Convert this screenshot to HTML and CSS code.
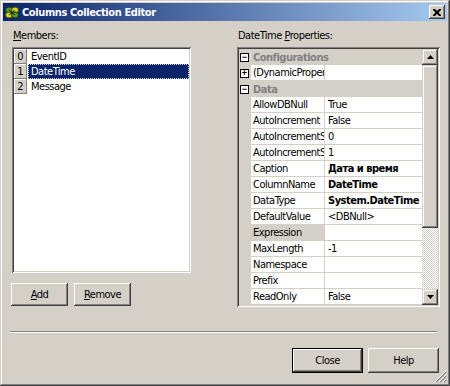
FILE: index.html
```html
<!DOCTYPE html>
<html lang="en">
<head>
    <meta charset="UTF-8">
    <meta name="viewport" content="width=device-width, initial-scale=1.0">
    <title>Columns Collection Editor</title>
    <link rel="stylesheet" href="styles.css">
</head>
<body>
    <div class="window">
        <div class="titlebar">
            <svg class="app-icon" width="16" height="16" viewBox="0 0 16 16">
                <ellipse cx="5" cy="6" rx="3.5" ry="3" fill="#5a9a1a" stroke="#1e3d08"/>
                <ellipse cx="11" cy="6" rx="3.5" ry="3" fill="#d8d820" stroke="#4a4a08"/>
                <ellipse cx="5" cy="11" rx="3.5" ry="3" fill="#d8d820" stroke="#4a4a08"/>
                <ellipse cx="11" cy="11" rx="3.5" ry="3" fill="#5a9a1a" stroke="#1e3d08"/>
                <path d="M5 6 L11 11 M11 6 L5 11" stroke="#123" stroke-width="1"/>
            </svg>
            <span class="title">Columns Collection Editor</span>
            <button class="close-x">
                <svg width="8" height="7" viewBox="0 0 8 7">
                    <path d="M0 0h2l2 2 2-2h2v1l-2.5 2.5 2.5 2.5v1h-2l-2-2-2 2h-2v-1l2.5-2.5-2.5-2.5z" fill="#000"/>
                </svg>
            </button>
        </div>

        <div class="content">
            <div class="col-left">
                <div class="label"><u>M</u>embers:</div>
                <div class="listbox">
                    <div class="item"><span class="idx">0</span><span class="item-name">EventID</span></div>
                    <div class="item selected"><span class="idx">1</span><span class="item-name">DateTime</span></div>
                    <div class="item"><span class="idx">2</span><span class="item-name">Message</span></div>
                </div>
                <div class="list-buttons">
                    <button class="btn small"><u>A</u>dd</button>
                    <button class="btn small"><u>R</u>emove</button>
                </div>
            </div>

            <div class="col-right">
                <div class="label">DateTime <u>P</u>roperties:</div>
                <div class="propgrid">
                    <div class="rows">
                        <div class="category"><span class="box">&minus;</span>Configurations</div>
                        <div class="prop"><span class="margin"><span class="box">+</span></span><span class="pname">(DynamicProper</span><span class="pvalue"></span></div>
                        <div class="category"><span class="box">&minus;</span>Data</div>
                        <div class="prop"><span class="margin"></span><span class="pname">AllowDBNull</span><span class="pvalue">True</span></div>
                        <div class="prop"><span class="margin"></span><span class="pname">AutoIncrement</span><span class="pvalue">False</span></div>
                        <div class="prop"><span class="margin"></span><span class="pname">AutoIncrementS</span><span class="pvalue">0</span></div>
                        <div class="prop"><span class="margin"></span><span class="pname">AutoIncrementS</span><span class="pvalue">1</span></div>
                        <div class="prop"><span class="margin"></span><span class="pname">Caption</span><span class="pvalue bold">Дата и время</span></div>
                        <div class="prop"><span class="margin"></span><span class="pname">ColumnName</span><span class="pvalue bold">DateTime</span></div>
                        <div class="prop"><span class="margin"></span><span class="pname">DataType</span><span class="pvalue bold">System.DateTime</span></div>
                        <div class="prop"><span class="margin"></span><span class="pname">DefaultValue</span><span class="pvalue">&lt;DBNull&gt;</span></div>
                        <div class="prop"><span class="margin"></span><span class="pname current">Expression</span><span class="pvalue"></span></div>
                        <div class="prop"><span class="margin"></span><span class="pname">MaxLength</span><span class="pvalue">-1</span></div>
                        <div class="prop"><span class="margin"></span><span class="pname">Namespace</span><span class="pvalue"></span></div>
                        <div class="prop"><span class="margin"></span><span class="pname">Prefix</span><span class="pvalue"></span></div>
                        <div class="prop"><span class="margin"></span><span class="pname">ReadOnly</span><span class="pvalue">False</span></div>
                    </div>
                    <div class="scrollbar">
                        <div class="sb-btn"><svg width="7" height="4" viewBox="0 0 7 4"><path d="M3.5 0L7 4H0z" fill="#000"/></svg></div>
                        <div class="sb-thumb"></div>
                        <div class="sb-track"></div>
                        <div class="sb-btn"><svg width="7" height="4" viewBox="0 0 7 4"><path d="M0 0h7L3.5 4z" fill="#000"/></svg></div>
                    </div>
                </div>
            </div>
        </div>

        <div class="separator"></div>

        <div class="footer">
            <button class="btn wide default">Close</button>
            <button class="btn wide">Help</button>
        </div>

        <svg class="grip" width="12" height="12" viewBox="0 0 12 12">
            <path d="M11 1L1 11M11 5L5 11M11 9L9 11" stroke="#808080" stroke-width="1.5"/>
            <path d="M11 0L0 11M11 4L4 11M11 8L8 11" stroke="#fff" stroke-width="1"/>
        </svg>
    </div>
</body>
</html>
```

FILE: styles.css
```css
* {
    box-sizing: border-box;
}
body {
    margin: 0;
    font-family: "DejaVu Sans Condensed", "Liberation Sans", sans-serif;
    font-size: 11px;
    letter-spacing: -0.5px;
    color: #000;
    background: #d4d0c8;
}
u {
    text-decoration: underline;
    text-underline-offset: 1px;
}
.window {
    position: relative;
    width: 450px;
    height: 386px;
    padding: 3px;
    background: #d4d0c8;
    box-shadow: inset -1px -1px #404040, inset 1px 1px #d4d0c8,
                inset -2px -2px #808080, inset 2px 2px #fff;
}

/* title bar */
.titlebar {
    height: 18px;
    display: flex;
    align-items: center;
    padding: 0 2px 0 1px;
    background: linear-gradient(to right, #0a246a, #a6caf0);
}
.app-icon {
    margin-right: 2px;
}
.title {
    flex: 1;
    color: #fff;
    font-weight: bold;
    letter-spacing: -0.4px;
}
.close-x {
    width: 16px;
    height: 14px;
    padding: 0;
    border: none;
    display: flex;
    align-items: center;
    justify-content: center;
    background: #d4d0c8;
    box-shadow: inset -1px -1px #404040, inset 1px 1px #fff,
                inset -2px -2px #808080, inset 2px 2px #d4d0c8;
}

/* main area */
.content {
    display: grid;
    grid-template-columns: 179px 203px;
    column-gap: 46px;
    align-items: start;
    padding: 8px 0 0 9px;
}
.label {
    height: 13px;
    line-height: 13px;
    margin-bottom: 5px;
    padding-left: 1px;
}

.listbox {
    height: 226px;
    padding: 2px;
    background: #fff;
    box-shadow: inset 1px 1px #808080, inset -1px -1px #fff,
                inset 2px 2px #404040, inset -2px -2px #d4d0c8;
}
.item {
    display: flex;
    height: 15px;
    line-height: 15px;
}
.idx {
    width: 13px;
    text-align: center;
    letter-spacing: 0;
    background: #d4d0c8;
    box-shadow: inset -1px -1px #808080, inset 1px 1px #fff;
    margin-right: 1px;
}
.item-name {
    flex: 1;
    padding-left: 3px;
}
.item.selected .item-name {
    background: #0a246a;
    color: #fff;
    outline: 1px dotted #d4d0c8;
    outline-offset: -1px;
}

.list-buttons {
    display: flex;
    gap: 6px;
    margin: 10px 0 0 -1px;
}
.btn {
    height: 23px;
    padding: 0;
    font: inherit;
    letter-spacing: inherit;
    color: #000;
    background: #d4d0c8;
    border: none;
    box-shadow: inset -1px -1px #404040, inset 1px 1px #fff,
                inset -2px -2px #808080, inset 2px 2px #d4d0c8;
}
.btn.small {
    width: 57px;
}
.btn.wide {
    width: 71px;
    height: 25px;
}
.btn.default {
    border: 1px solid #000;
    box-shadow: inset -1px -1px #404040, inset 1px 1px #fff,
                inset -2px -2px #808080;
}

/* property grid */
.propgrid {
    display: flex;
    height: 260px;
    padding: 2px;
    background: #d4d0c8;
    box-shadow: inset 1px 1px #808080, inset -1px -1px #fff,
                inset 2px 2px #404040, inset -2px -2px #d4d0c8;
}
.rows {
    flex: 1;
    overflow: hidden;
}
.category, .prop {
    height: 16px;
    line-height: 15px;
    display: flex;
    white-space: nowrap;
}
.category {
    background: #d4d0c8;
    color: #808080;
    font-weight: bold;
    align-items: center;
    padding-left: 1px;
}
.box {
    width: 9px;
    height: 9px;
    border: 1px solid #000;
    background: #fff;
    color: #000;
    font-size: 9px;
    font-weight: bold;
    line-height: 7px;
    text-align: center;
    letter-spacing: 0;
    margin-right: 4px;
    font-family: "Liberation Sans", sans-serif;
}
.margin {
    width: 12px;
    flex-shrink: 0;
    background: #d4d0c8;
    display: flex;
    align-items: center;
    padding-left: 1px;
}
.margin .box {
    margin-right: 0;
}
.pname, .pvalue {
    background: #fff;
    border-bottom: 1px solid #d4d0c8;
    overflow: hidden;
}
.pname {
    width: 74px;
    padding-left: 2px;
    border-right: 1px solid #d4d0c8;
    flex-shrink: 0;
}
.pname.current {
    background: #d4d0c8;
}
.pvalue {
    flex: 1;
    padding-left: 3px;
}
.bold {
    font-weight: bold;
}

.scrollbar {
    width: 16px;
    display: flex;
    flex-direction: column;
}
.sb-btn, .sb-thumb {
    background: #d4d0c8;
    box-shadow: inset -1px -1px #404040, inset 1px 1px #d4d0c8,
                inset -2px -2px #808080, inset 2px 2px #fff;
}
.sb-btn {
    height: 16px;
    display: flex;
    align-items: center;
    justify-content: center;
}
.sb-thumb {
    height: 163px;
}
.sb-track {
    flex: 1;
    background: repeating-conic-gradient(#fff 0 25%, #d4d0c8 0 50%) 0 0 / 2px 2px;
}

.separator {
    margin: 24px 0 0 7px;
    width: 427px;
    border-top: 1px solid #808080;
    border-bottom: 1px solid #fff;
}
.footer {
    display: flex;
    justify-content: flex-end;
    gap: 5px;
    margin-top: 15px;
    padding-right: 8px;
}
.grip {
    position: absolute;
    right: 3px;
    bottom: 3px;
}
```
